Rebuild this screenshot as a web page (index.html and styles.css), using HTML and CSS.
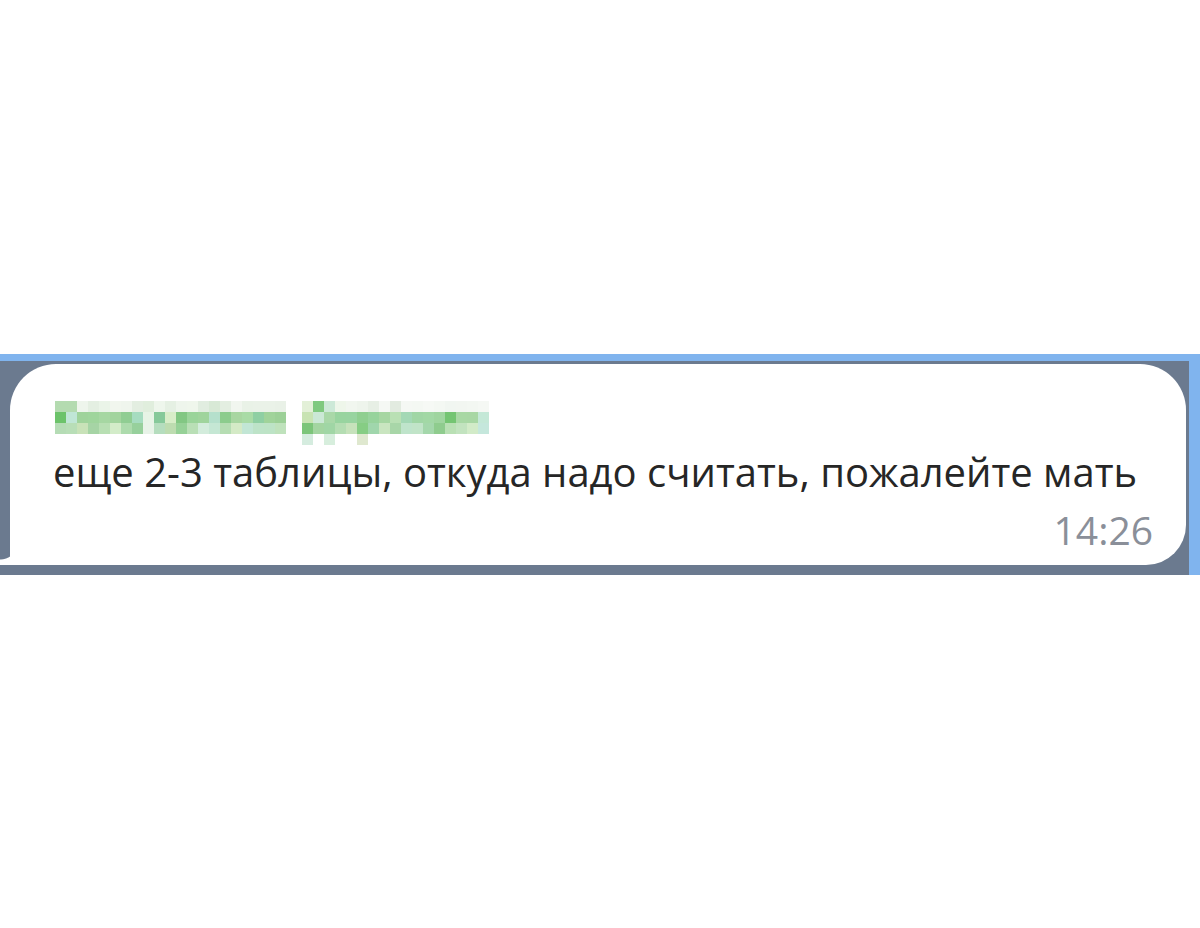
FILE: index.html
```html
<!DOCTYPE html>
<html lang="ru">
<head>
    <meta charset="UTF-8">
    <meta name="viewport" content="width=device-width, initial-scale=1.0">
    <title>Сообщение</title>
    <link rel="stylesheet" href="styles.css">
</head>
<body>
    <main class="chat">
        <div class="bubble">
            <div class="sender" id="sender"></div>
            <p class="text">еще 2-3 таблицы, откуда надо считать, пожалейте мать</p>
            <div class="time">14:26</div>
        </div>
    </main>

    <script src="script.js"></script>
</body>
</html>
```

FILE: styles.css
```css
* {
    margin: 0;
    padding: 0;
    box-sizing: border-box;
}

body {
    width: 100%;
    height: 100vh;
    display: flex;
    flex-direction: column;
    justify-content: center;
    background: #fff;
    font-family: "Open Sans", "Noto Sans", sans-serif;
}

.chat {
    height: 221px;
    background: #6b7a8f;
    border-top: 7px solid #80b4ee;
    border-right: 11px solid #80b4ee;
    padding: 3px 3px 10px 10px;
}

.bubble {
    position: relative;
    height: 100%;
    background: #fff;
    border-radius: 46px 46px 40px 0;
    padding: 37px 33px 0 43px;
}

/* tail in the bottom-left corner */
.bubble::before {
    content: "";
    position: absolute;
    left: -10px;
    bottom: 0;
    width: 10px;
    height: 24px;
    background: radial-gradient(circle at 0 0, transparent 18px, #fff 19px);
}

.sender {
    display: flex;
    gap: 16px;
    height: 33px;
    margin-left: 2px;
}

.sender .word {
    display: grid;
    grid-auto-rows: 11px;
    align-content: start;
}

.sender .word span {
    width: 11px;
    height: 11px;
}

.text {
    margin-top: 14px;
    font-size: 40px;
    line-height: 48px;
    color: #262626;
}

.time {
    margin-top: 14px;
    text-align: right;
    font-size: 39px;
    line-height: 40px;
    color: #8a8f99;
}
```

FILE: script.js
```js
// blurred sender name, one row of cells per line
var words = [
    [
        ['#b4dbb0', '#b4dbb0', '#eef5ec', '#e4efe2', '#eaf4e8', '#f1f6ee', '#eff5ed', '#e3eee1', '#e0eedd', '#eef6ec', '#e5f0e3', '#eef5ec', '#eff6ec', '#e1ede0', '#d8e9d6', '#e3eee1', '#f1f6ef', '#e9f2e7', '#eaf2e8', '#eaf2e8', '#e9f1e7'],
        ['#6cc36a', '#c0e6d6', '#9fd39b', '#9fd59c', '#a6d7a2', '#a2d49e', '#90cd93', '#a6dcc0', '#e7f4e6', '#86c99a', '#d8edc8', '#82c783', '#9ad49a', '#9fd49c', '#b5e0cc', '#8ccc8d', '#a8d6a1', '#a9dba6', '#8fcfa3', '#a0d39a', '#9cd097'],
        ['#b5dcb5', '#b8deb7', '#c8e2b8', '#a6d4a5', '#b8dfb3', '#d3ecc9', '#addbad', '#97d09c', '#e8f3e8', '#b5ddbe', '#bddcb0', '#96d197', '#b9dfb6', '#d3ecdc', '#c5e7d4', '#b6ddb3', '#d4eac6', '#c2e6d5', '#bde3c8', '#bde3c6', '#bfe2bc']
    ],
    [
        ['#e3f0d8', '#7fc97f', '#cde9d8', '#eef6ea', '#f1f6ef', '#eef4ec', '#e7efe5', '#f5f8f4', '#e2ebe0', '#f5f8f4', '#f4f8f3', '#f6f9f5', '#f4f8f3', '#f1f6f1', '#f2f6f1', '#f3f7f2', '#f5f8f4'],
        ['#c8e3b3', '#cbe8d6', '#a9d8a8', '#98d49f', '#98d4a0', '#8fcf90', '#97d39c', '#a6d6a2', '#b9e0b4', '#a3d8b5', '#a0d6a5', '#a2d8a5', '#9fd59f', '#74c572', '#a8d8a4', '#a8d7a4', '#c4e8d7'],
        ['#7cc57a', '#a3d5a1', '#a0d6a5', '#b4ddb2', '#c6e2bb', '#86cd84', '#a0d6ac', '#c9e5c0', '#a8d6a8', '#bfe4cb', '#c1e4c8', '#a4d7ab', '#8fcc8e', '#b9e0b4', '#c2e3bf', '#d2ebc8', '#c5e7dc'],
        ['#d5ecdf', '#fff', '#d7eedd', '#fff', '#fff', '#dfe8cf']
    ]
];

var sender = document.getElementById('sender');

words.forEach(function (rows) {
    var word = document.createElement('div');
    word.className = 'word';
    word.style.gridTemplateColumns = 'repeat(' + rows[0].length + ', 11px)';

    rows.forEach(function (row) {
        for (var i = 0; i < rows[0].length; i++) {
            var cell = document.createElement('span');
            cell.style.background = row[i] || '#fff';
            word.appendChild(cell);
        }
    });

    sender.appendChild(word);
});
```
